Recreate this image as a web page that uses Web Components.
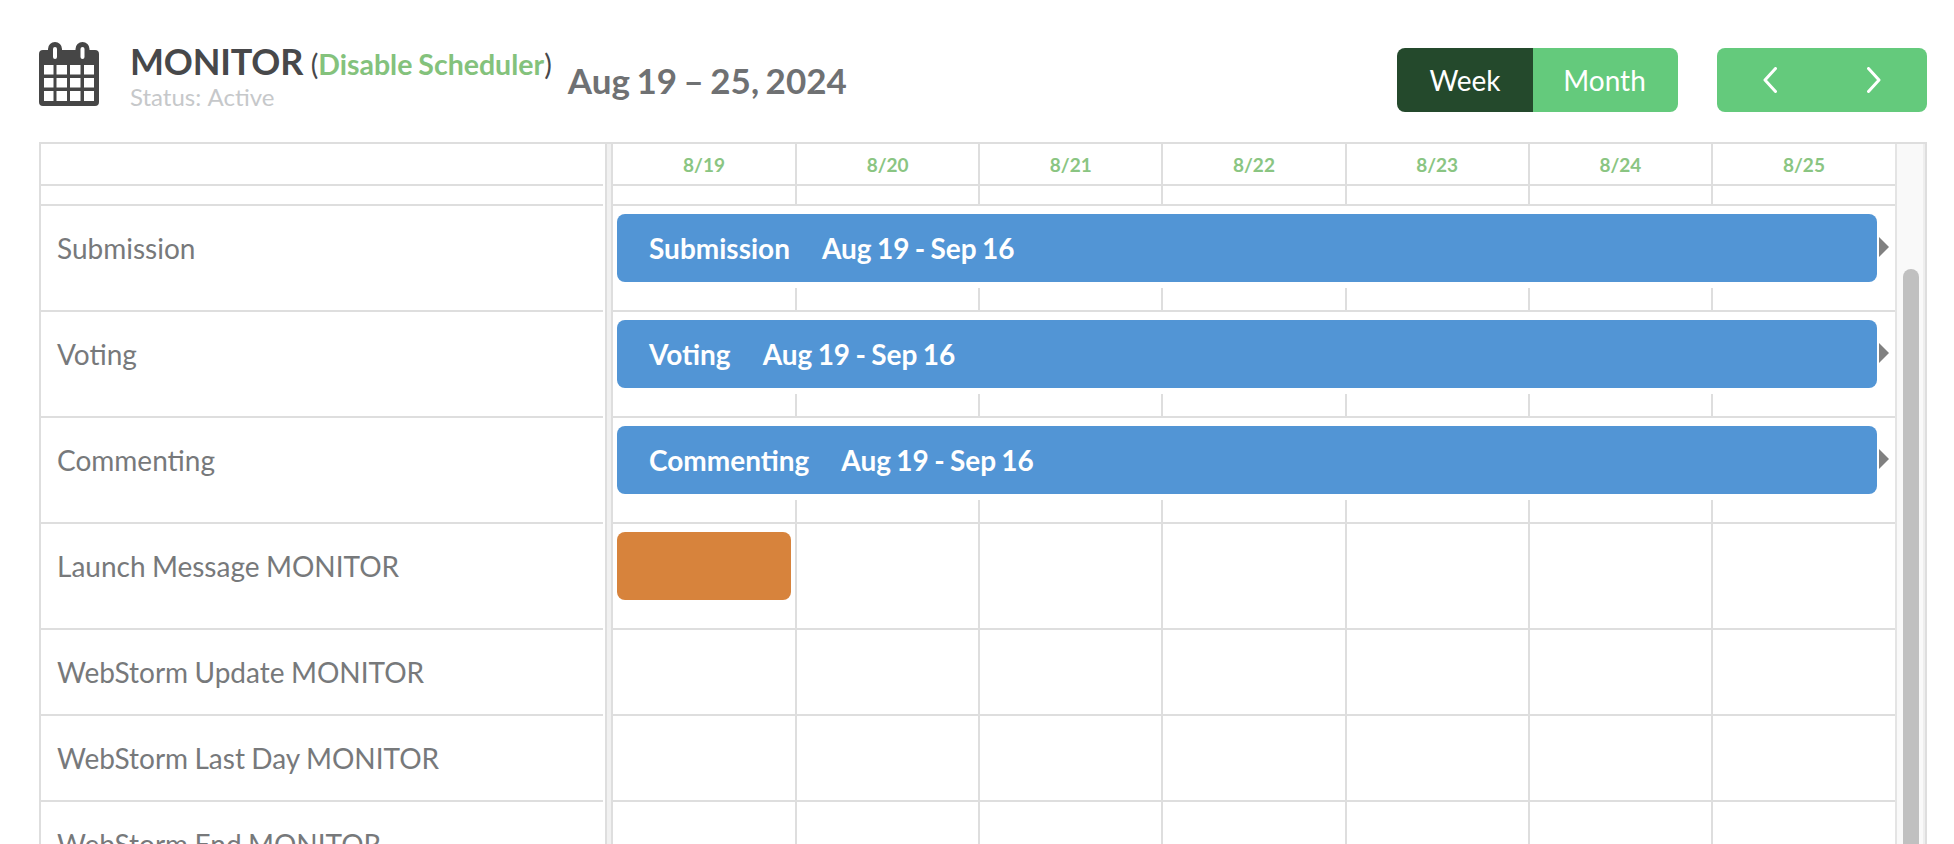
<!DOCTYPE html>
<html>
<head>
<meta charset="utf-8">
<title>Scheduler</title>
<style>
  html, body { margin: 0; height: 100%; overflow: hidden; background: #fff; }
  body { font-family: Lato, "Open Sans", sans-serif; }
  .page { padding: 0 27px 0 39px; }
</style>
</head>
<body>
<div class="page">
  <cal-header></cal-header>
  <sched-grid>
    <sched-head dates="8/19,8/20,8/21,8/22,8/23,8/24,8/25"></sched-head>
    <sched-head></sched-head>
    <sched-row label="Submission" size="tall"><event-bar name="Submission" range="Aug 19 - Sep 16" more></event-bar></sched-row>
    <sched-row label="Voting" size="tall"><event-bar name="Voting" range="Aug 19 - Sep 16" more></event-bar></sched-row>
    <sched-row label="Commenting" size="tall"><event-bar name="Commenting" range="Aug 19 - Sep 16" more></event-bar></sched-row>
    <sched-row label="Launch Message MONITOR" size="tall"><event-chip></event-chip></sched-row>
    <sched-row label="WebStorm Update MONITOR"></sched-row>
    <sched-row label="WebStorm Last Day MONITOR"></sched-row>
    <sched-row label="WebStorm End MONITOR"></sched-row>
  </sched-grid>
</div>

<script>
const line = "#dedede";
const cols = "184px repeat(5, 183.2px) 1fr";
const rowCols = "562px 2px 8px 1282px 30px";

const cells = (texts = []) => {
  let out = "";
  for (let i = 0; i < 7; i++) out += `<div class="cell">${texts[i] || ""}</div>`;
  return out;
};

const rowStyle = `
  .label { border-bottom: 2px solid ${line}; }
  .divider { grid-column: 3; background: #f1f1f1; border-left: 2px solid ${line}; border-right: 2px solid ${line}; }
  .time { position: relative; display: flex; flex-direction: column; border-bottom: 2px solid ${line}; min-width: 0; }
  .cells { flex: 1; display: grid; grid-template-columns: ${cols}; }
  .cell { border-right: 2px solid ${line}; }
  .cell:last-child { border-right: 0; }
  .gutter { background: #f9f9f9; border-left: 2px solid #e4e4e4; border-right: 2px solid #eeeeee; }
`;

class CalHeader extends HTMLElement {
  constructor() {
    super();
    const shadow = this.attachShadow({ mode: "open" });
    shadow.innerHTML = `
    <style>
      :host { display: flex; height: 142px; align-items: flex-start; }
      svg.cal { width: 60px; height: 64px; margin-top: 42px; flex: none; }
      .titles { margin-left: 31px; margin-top: 41px; flex: none; }
      .name { font-size: 36px; line-height: 40px; font-weight: 700; color: #47484a; letter-spacing: -0.2px; white-space: nowrap; word-spacing: -1px; }
      .paren { font-size: 28.5px; font-weight: 400; letter-spacing: 0; word-spacing: -1px; }
      .paren b { color: #84c27c; font-weight: 700; }
      .status { font-size: 24px; line-height: 26px; color: #c6c8ca; word-spacing: 1px; }
      .range { margin-left: 16px; margin-top: 59px; font-size: 35px; line-height: 42px; font-weight: 700; color: #6f7173; white-space: nowrap; word-spacing: -2px; }
      view-toggle { margin-left: auto; margin-top: 48px; }
      nav-buttons { margin-left: 39px; margin-top: 48px; }
    </style>
    <svg class="cal" viewBox="0 0 60 64">
      <path fill="#464646" fill-rule="evenodd" d="M4 8h5V7a7 7 0 0 1 14 0v1h13.5V7a7 7 0 0 1 14 0v1H56a4 4 0 0 1 4 4v48a4 4 0 0 1-4 4H4a4 4 0 0 1-4-4V12a4 4 0 0 1 4-4z"/>
      <g fill="#fff">
        <rect x="14" y="5" width="4" height="12" rx="2"/><rect x="41.5" y="5" width="4" height="12" rx="2"/>
        <rect x="5" y="23" width="9.5" height="9.5"/><rect x="17.5" y="23" width="10.5" height="9.5"/><rect x="31" y="23" width="10.5" height="9.5"/><rect x="45" y="23" width="10" height="9.5"/>
        <rect x="5" y="36" width="9.5" height="9.5"/><rect x="17.5" y="36" width="10.5" height="9.5"/><rect x="31" y="36" width="10.5" height="9.5"/><rect x="45" y="36" width="10" height="9.5"/>
        <rect x="5" y="49" width="9.5" height="10"/><rect x="17.5" y="49" width="10.5" height="10"/><rect x="31" y="49" width="10.5" height="10"/><rect x="45" y="49" width="10" height="10"/>
      </g>
    </svg>
    <div class="titles">
      <div class="name">MONITOR <span class="paren">(<b>Disable Scheduler</b>)</span></div>
      <div class="status">Status: Active</div>
    </div>
    <div class="range">Aug 19 – 25, 2024</div>
    <view-toggle></view-toggle>
    <nav-buttons></nav-buttons>
    `;
  }
}
customElements.define("cal-header", CalHeader);

class ViewToggle extends HTMLElement {
  constructor() {
    super();
    this.attachShadow({ mode: "open" }).innerHTML = `
    <style>
      :host { display: flex; height: 64px; border-radius: 8px; overflow: hidden; font-size: 28px; color: #fff; }
      div { display: flex; align-items: center; justify-content: center; box-sizing: border-box; }
      .week { width: 136px; background: #24492c; }
      .month { width: 145px; padding-right: 2px; background: #64ca7c; }
    </style>
    <div class="week">Week</div><div class="month">Month</div>
    `;
  }
}
customElements.define("view-toggle", ViewToggle);

class NavButtons extends HTMLElement {
  constructor() {
    super();
    this.attachShadow({ mode: "open" }).innerHTML = `
    <style>
      :host { display: flex; width: 210px; height: 64px; border-radius: 8px; background: #64ca7c; align-items: center; justify-content: space-between; padding: 0 46px; box-sizing: border-box; }
      svg { width: 14px; height: 26px; }
    </style>
    <svg viewBox="0 0 14 26"><path d="M12.5 1.5 2 13l10.5 11.5" fill="none" stroke="#fff" stroke-width="3" stroke-linecap="round" stroke-linejoin="round"/></svg>
    <svg viewBox="0 0 14 26"><path d="M1.5 1.5 12 13 1.5 24.5" fill="none" stroke="#fff" stroke-width="3" stroke-linecap="round" stroke-linejoin="round"/></svg>
    `;
  }
}
customElements.define("nav-buttons", NavButtons);

class SchedGrid extends HTMLElement {
  constructor() {
    super();
    this.attachShadow({ mode: "open" }).innerHTML = `
    <style>
      :host { display: block; position: relative; height: 702px; box-sizing: border-box; overflow: hidden; border-top: 2px solid ${line}; border-left: 2px solid ${line}; border-right: 2px solid ${line}; }
      .thumb { position: absolute; left: 1862px; top: 125px; width: 16px; height: 700px; border-radius: 8px; background: #c0c0c0; }
    </style>
    <slot></slot>
    <div class="thumb"></div>
    `;
  }
}
customElements.define("sched-grid", SchedGrid);

class SchedHead extends HTMLElement {
  constructor() {
    super();
    const dates = (this.getAttribute("dates") || "").split(",");
    const tall = this.hasAttribute("dates");
    this.attachShadow({ mode: "open" }).innerHTML = `
    <style>
      :host { display: grid; grid-template-columns: ${rowCols}; height: ${tall ? 42 : 20}px; box-sizing: border-box; }
      ${rowStyle}
      .cell { display: flex; align-items: center; justify-content: center; font-size: 19px; font-weight: 700; color: #8ac582; }
    </style>
    <div class="label"></div>
    <div class="divider"></div>
    <div class="time"><div class="cells">${cells(dates)}</div></div>
    <div class="gutter"></div>
    `;
  }
}
customElements.define("sched-head", SchedHead);

class SchedRow extends HTMLElement {
  constructor() {
    super();
    const h = this.getAttribute("size") == "tall" ? 106 : 86;
    this.attachShadow({ mode: "open" }).innerHTML = `
    <style>
      :host { display: grid; grid-template-columns: ${rowCols}; height: ${h}px; }
      ${rowStyle}
      .label { font-size: 28px; line-height: 84px; color: #77797b; padding-left: 16px; white-space: nowrap; word-spacing: -0.8px; }
    </style>
    <div class="label">${this.getAttribute("label")}</div>
    <div class="divider"></div>
    <div class="time"><slot></slot><div class="cells">${cells()}</div></div>
    <div class="gutter"></div>
    `;
  }
}
customElements.define("sched-row", SchedRow);

class EventBar extends HTMLElement {
  constructor() {
    super();
    this.attachShadow({ mode: "open" }).innerHTML = `
    <style>
      :host { display: flex; flex: none; height: 82px; box-sizing: border-box; padding: 8px 6px 6px 4px; align-items: center; gap: 2px; background: #fff; }
      .bar { flex: 1; height: 68px; border-radius: 8px; background: #5295d5; color: #fff; font-size: 28px; font-weight: 700; display: flex; align-items: center; gap: 32px; padding-left: 32px; white-space: nowrap; word-spacing: -1.5px; }
      .more { width: 0; height: 0; border-left: 10px solid #808080; border-top: 10px solid transparent; border-bottom: 10px solid transparent; margin-top: -2px; }
    </style>
    <div class="bar"><span>${this.getAttribute("name")}</span><span>${this.getAttribute("range")}</span></div>
    <div class="more"></div>
    `;
  }
}
customElements.define("event-bar", EventBar);

class EventChip extends HTMLElement {
  constructor() {
    super();
    this.attachShadow({ mode: "open" }).innerHTML = `
    <style>
      :host { position: absolute; left: 4px; top: 8px; width: 174px; height: 68px; border-radius: 8px; background: #d7833c; }
    </style>
    `;
  }
}
customElements.define("event-chip", EventChip);
</script>
</body>
</html>
